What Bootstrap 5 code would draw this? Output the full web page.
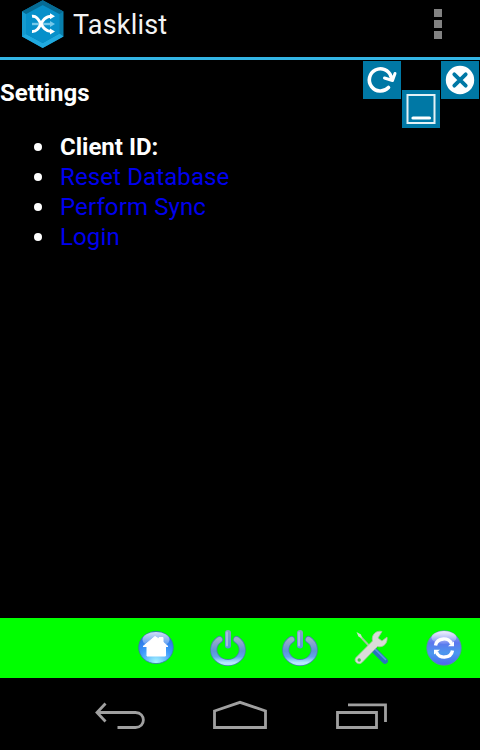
<!DOCTYPE html>
<html lang="en">
<head>
<meta charset="utf-8">
<meta name="viewport" content="width=device-width, initial-scale=1">
<title>Tasklist</title>
<link href="https://cdn.jsdelivr.net/npm/bootstrap@5.3.0/dist/css/bootstrap.min.css" rel="stylesheet">
<style>
body{font-family:Roboto,sans-serif;background:#000;color:#fff;height:750px;width:480px;overflow:hidden}
svg{display:block;flex:none}
.topbar{height:60px;border-bottom:3px solid #33b5e5;padding:0 31px 0 21px}
.app-name{font-size:27px;line-height:50px;height:57px;margin-left:9px;color:#f3f3f3;letter-spacing:.18px}
.content-area{font-size:24px;line-height:30px;padding-top:18px}
.content-area h1{font-size:24px;line-height:30px;letter-spacing:-.05px}
.settings{margin-top:24px}
.settings li{height:30px;padding-left:34px}
.settings li::before{content:"";width:8px;height:8px;border-radius:50%;background:#fff;margin-right:18px;flex:none}
.settings a{color:#0000ee;letter-spacing:.12px}
.window-tools{top:1px;right:1px;gap:1px}
.tool{width:38px;height:38px;background:#0078a5}
.tool.lower{margin-top:29px}
.dock{height:60px;background:#0f0;padding-right:18px;gap:36px}
.sysbar{height:72px}
</style>
<script src="https://cdn.jsdelivr.net/npm/bootstrap@5.3.0/dist/js/bootstrap.bundle.min.js"></script>
</head>
<body class="d-flex flex-column">
<header class="topbar d-flex justify-content-between">
  <div class="d-flex">
    <svg width="43" height="49" viewBox="21 0 43 49">
      <path d="M42.700 .3 63.500 11.500V36.500L42.700 48 22 36.500V11.500Z" fill="#087fac"/>
      <path d="M22 11.500 26 14V34L42.700 43 59.500 33.500 63.500 36.500 42.700 48 22 36.500Z" fill="#20a9df"/>
      <path d="M22 11.500 26 14V34L22 36.500Z" fill="#159bd0"/>
      <path d="M42.700 5 59.500 14V33.500L42.700 43 26 34V14Z" fill="#0790ca"/>
      <path d="M42.700 .3 63.500 11.500 59.500 14 42.700 5 26 14 22 11.500Z" fill="#066b94"/>
      <path d="M32 24H51" stroke="#75c9ea" stroke-width="2.400"/><path d="M50 21V27L55 24Z" fill="#75c9ea"/>
      <path d="M32 16.300C41 15 40 32 52 31.500M32 31.500C42 32 39 16 52 16.300" fill="none" stroke="#fff" stroke-width="2.900"/>
      <path d="M50 13.300V19.300L55 16.300ZM50 28.600V34.600L55 31.600Z" fill="#fff"/>
    </svg>
    <div class="app-name">Tasklist</div>
  </div>
  <svg width="15" height="57" viewBox="434 0 15 57"><path d="M434 9h8v8h-8zM434 20h8v8h-8zM434 31h8v8h-8z" fill="#828282"/></svg>
</header>
<main class="content-area flex-grow-1 position-relative">
  <h1 class="fw-bold mb-0">Settings</h1>
  <ul class="settings list-unstyled mb-0">
    <li class="d-flex align-items-center fw-bold">Client ID:</li>
    <li class="d-flex align-items-center"><a class="text-decoration-none" href="#">Reset Database</a></li>
    <li class="d-flex align-items-center"><a class="text-decoration-none" href="#">Perform Sync</a></li>
    <li class="d-flex align-items-center"><a class="text-decoration-none" href="#">Login</a></li>
  </ul>
  <div class="window-tools d-flex align-items-start position-absolute">
    <div class="tool"><svg width="38" height="38"><path d="M25.500 26.500A11.100 11.100 0 1 1 28 15.500" fill="none" stroke="#fff" stroke-width="3.600" stroke-linecap="round"/><path d="M21.500 17 29.500 19.500 32 12.500M29.500 19.500 27.500 14" fill="none" stroke="#fff" stroke-width="3" stroke-linecap="round" stroke-linejoin="round"/></svg></div>
    <div class="tool lower"><svg width="38" height="38"><path d="M5.500 5H32.500V33H5.500Z" fill="none" stroke="#e4f1f6" stroke-width="2"/><path d="M11 28H27.500" stroke="#fff" stroke-width="3.200" stroke-linecap="round"/></svg></div>
    <div class="tool"><svg width="38" height="38"><circle cx="19" cy="19" r="14.200" fill="#fff"/><path d="M13.300 13.300 24.700 24.700M24.700 13.300 13.300 24.700" stroke="#0078a5" stroke-width="3.800" stroke-linecap="round"/></svg></div>
  </div>
</main>
<nav class="dock d-flex justify-content-end align-items-center">
  <svg width="36" height="36">
    <defs>
      <radialGradient id="homeFill" cx=".5" cy=".95" r=".95"><stop offset="0" stop-color="#a5f4ff"/><stop offset=".5" stop-color="#3e9bfa"/><stop offset="1" stop-color="#2464df"/></radialGradient>
      <linearGradient id="gloss" x2="0" y2="1"><stop stop-color="#fff" stop-opacity=".8"/><stop offset="1" stop-color="#fff" stop-opacity=".1"/></linearGradient>
      <linearGradient id="powerFill" x2="0" y2="1"><stop stop-color="#9badc8"/><stop offset=".5" stop-color="#5d92d8"/><stop offset=".75" stop-color="#62a4ea"/><stop offset="1" stop-color="#b4e8ff"/></linearGradient>
      <linearGradient id="stemFill" x2="0" y2="1"><stop stop-color="#8ba3c0"/><stop offset="1" stop-color="#5b8fe0"/></linearGradient>
      <linearGradient id="syncFill" x2="0" y2="1"><stop stop-color="#a9b4f4"/><stop offset=".35" stop-color="#5c77ee"/><stop offset=".65" stop-color="#4b98ee"/><stop offset="1" stop-color="#4d65ef"/></linearGradient>
    </defs>
    <ellipse cx="18" cy="17.500" rx="17.300" ry="16.100" fill="url(#homeFill)" stroke="#3a77a8" stroke-width=".8"/>
    <ellipse cx="18" cy="9.500" rx="13.500" ry="7.500" fill="url(#gloss)"/>
    <path d="M5 16.500 17 6.500 21 9V7.500H25V12L30 16.500H27.500V26H9V16.500Z" fill="#fff" stroke="#fff" stroke-linejoin="round"/>
  </svg>
  <svg width="36" height="36">
    <path d="M9.500 9.500A14.300 12.800 0 1 0 26.500 9.500" fill="none" stroke="#4a82ac" stroke-width="7" stroke-linecap="round"/>
    <path d="M9.500 9.500A14.300 12.800 0 1 0 26.500 9.500" fill="none" stroke="url(#powerFill)" stroke-width="5.400" stroke-linecap="round"/>
    <rect x="15" y="0" width="6" height="18.500" rx="3" fill="url(#stemFill)"/><rect x="16" y="1.500" width="2" height="15" rx="1" fill="#a3bcdd"/>
  </svg>
  <svg width="36" height="36">
    <path d="M9.500 9.500A14.300 12.800 0 1 0 26.500 9.500" fill="none" stroke="#4a82ac" stroke-width="7" stroke-linecap="round"/>
    <path d="M9.500 9.500A14.300 12.800 0 1 0 26.500 9.500" fill="none" stroke="url(#powerFill)" stroke-width="5.400" stroke-linecap="round"/>
    <rect x="15" y="0" width="6" height="18.500" rx="3" fill="url(#stemFill)"/><rect x="16" y="1.500" width="2" height="15" rx="1" fill="#a3bcdd"/>
  </svg>
  <svg width="36" height="36">
    <path d="M5 5 18 19" stroke="#a4c9a0" stroke-width="2"/><path d="M2.500 2 7 4.500 8 8 4.500 6.500Z" fill="#cde0cc"/>
    <path d="M20 20 31 31" stroke="#2a73bd" stroke-width="5.800" stroke-linecap="round"/><path d="M21 19 32 30" stroke="#5b9be2" stroke-width="1.500"/>
    <path d="M28 1.500C22.500 0 17 4.500 18.500 11L2 27.500C-1 31 4 36 8 32.500L23.500 16.500C29.500 18 34 13 33 7L28 11 24 8Z" fill="#d9dcd9" stroke="#a3c3a0" stroke-width=".8"/>
    <circle cx="5.200" cy="30" r="1.700" fill="#43c84b"/>
  </svg>
  <svg width="36" height="36">
    <circle cx="18" cy="18" r="17.200" fill="url(#syncFill)" stroke="#5c8ca9" stroke-width=".8"/>
    <ellipse cx="18" cy="7.500" rx="12.500" ry="6.500" fill="url(#gloss)"/>
    <path d="M9.500 15.500C11 7 23.500 7 25.500 14M26.500 20.500C25 29 12.500 29 10.500 22" fill="none" stroke="#fff" stroke-width="3.400"/>
    <path d="M22 16.300H28V11.500ZM14 19.700H8V24.500Z" fill="#fff"/>
  </svg>
</nav>
<footer class="sysbar">
  <svg width="480" height="72" viewBox="0 678 480 72" fill="none" stroke="#a0a0a0" stroke-width="2.800">
    <path d="M97 712.500H135.500C146 712.500 146 727.500 135.500 727.500H117.500M105.500 703.500 97 712.500 105.500 721.500"/>
    <path d="M214.500 711 240 702.300 265.500 711V727.500H214.500Z"/>
    <path d="M337.500 712.500H376.500V727.500H337.500ZM348 704.800H385.500V722"/>
  </svg>
</footer>
</body>
</html>
